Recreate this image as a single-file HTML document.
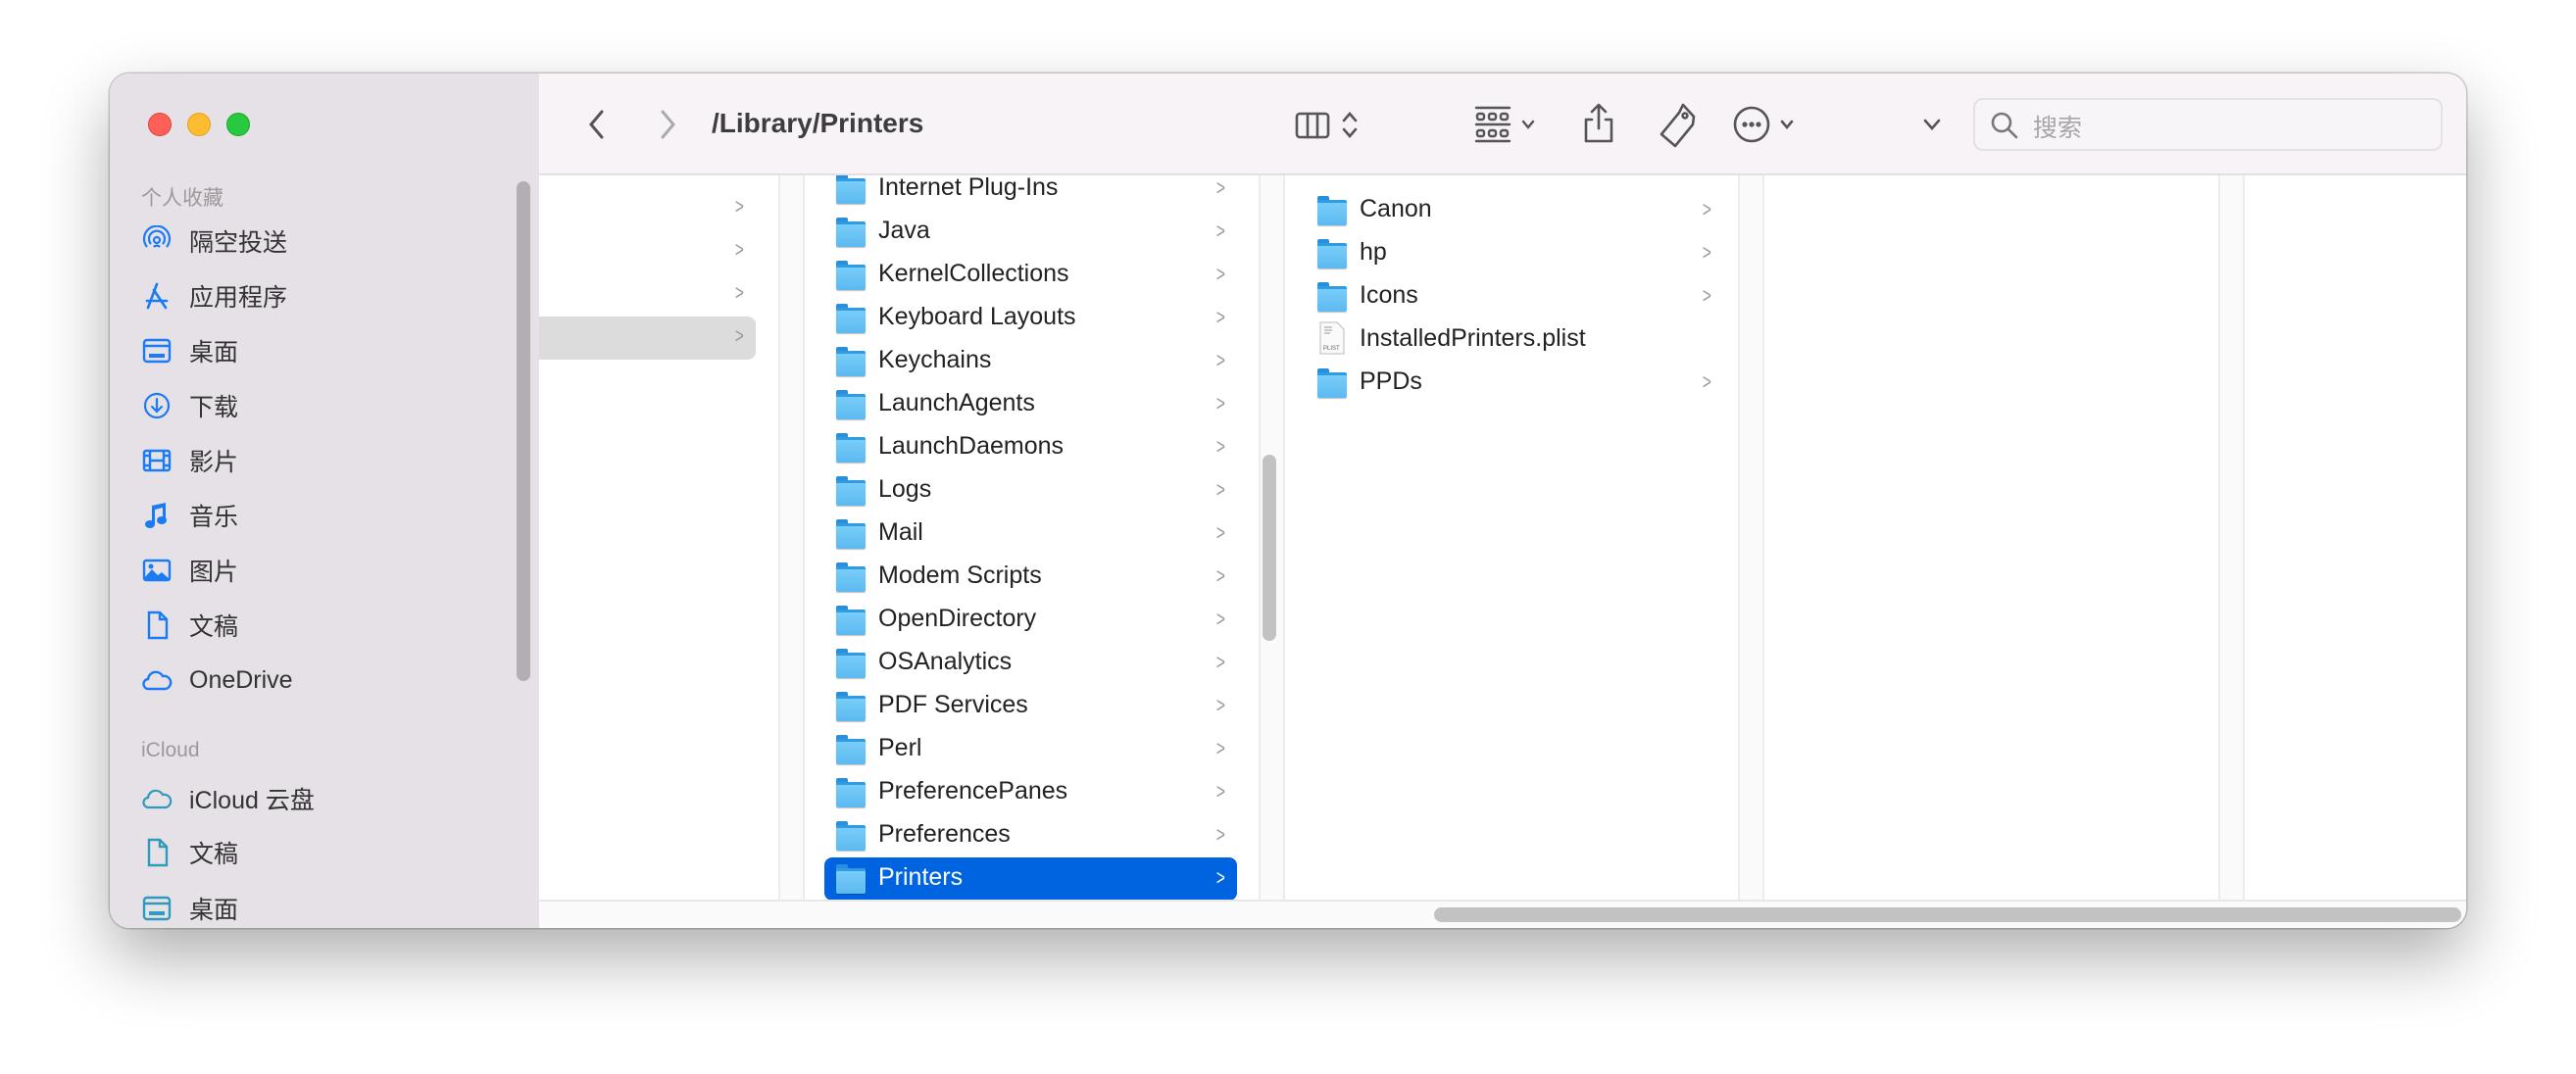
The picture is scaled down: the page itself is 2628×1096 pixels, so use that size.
<!DOCTYPE html>
<html><head><meta charset="utf-8"><style>
*{margin:0;padding:0;box-sizing:border-box}
body{width:2628px;height:1096px;background:#fff;position:relative;overflow:hidden;font-family:"Liberation Sans","Noto Sans CJK SC",sans-serif}
.win{position:absolute;left:112px;top:75px;width:2404px;height:872px;border-radius:20px;overflow:hidden;background:#fff;box-shadow:0 30px 70px rgba(0,0,0,.32),0 0 0 1.5px rgba(0,0,0,.18)}
.side{position:absolute;left:0;top:0;width:438px;height:872px;background:#e6e1e6}
.tb{position:absolute;left:438px;top:0;right:0;height:104px;background:#f7f3f7;border-bottom:2px solid #e3dfe3}
.abs{position:absolute}
.dot{position:absolute;width:24px;height:24px;border-radius:50%;top:40px}
.sh{position:absolute;left:32px;font-size:21px;color:#9c989c}
.si{position:absolute;left:32px;height:40px;display:flex;align-items:center;font-size:25px;color:#333}
.si svg{width:32px;height:32px;margin-right:17px;flex:none}
.gut{position:absolute;top:104px;height:814px;width:27px;background:#fafafa;border-left:2px solid #ececec;border-right:2px solid #ececec}
.gut i{position:absolute;bottom:8px;left:8px;width:8px;height:14px;border-left:1.5px solid #aaa;border-right:1.5px solid #aaa}
.row{position:absolute;height:44px;display:flex;align-items:center;font-size:25px;color:#222}
.chev{position:absolute;font-size:22px;color:#999;transform:scaleX(.7)}
.fold{width:30px;height:27px;position:relative;margin-right:13px;flex:none}
.fold:before{content:"";position:absolute;left:0;top:0;width:12px;height:6px;background:#2a8fdb;border-radius:2px 2px 0 0}
.fold:after{content:"";position:absolute;left:0;top:4px;width:30px;height:23px;background:linear-gradient(#78cdf8,#5cb9f0);border-radius:2px;border-top:3px solid #2f9be3;box-shadow:0 1px 1px rgba(0,0,0,.25)}
</style></head><body>
<div class="win">
<div class="side">
<div class="dot" style="left:39px;background:#fe5f57;border:1px solid #e0443e"></div>
<div class="dot" style="left:79px;background:#febc2e;border:1px solid #dea123"></div>
<div class="dot" style="left:119px;background:#28c840;border:1px solid #1aab29"></div>
<div class="sh" style="top:111px">个人收藏</div>
<div class="si" style="top:151px"><svg viewBox="0 0 32 32" fill="none" stroke="#1a7cf5" stroke-width="2.2"><circle cx="16" cy="15" r="3"/><path d="M10 19a8 8 0 1 1 12 0M6 22a13 13 0 1 1 20 0M13 22a4 4 0 0 1 6 0"/></svg>隔空投送</div>
<div class="si" style="top:207px"><svg viewBox="0 0 32 32" fill="none" stroke="#1a7cf5" stroke-width="2.6" stroke-linecap="round"><path d="M16 4L7 28M13 10l12 18M6 21h20"/></svg>应用程序</div>
<div class="si" style="top:263px"><svg viewBox="0 0 32 32" fill="none" stroke="#1a7cf5" stroke-width="2.4"><rect x="3" y="5" width="26" height="22" rx="3"/><path d="M3 11h26"/><rect x="8" y="19" width="16" height="4" fill="#1a7cf5" stroke="none"/></svg>桌面</div>
<div class="si" style="top:319px"><svg viewBox="0 0 32 32" fill="none" stroke="#1a7cf5" stroke-width="2.2" stroke-linecap="round"><circle cx="16" cy="16" r="12"/><path d="M16 9v13M11 17l5 5 5-5"/></svg>下载</div>
<div class="si" style="top:375px"><svg viewBox="0 0 32 32" fill="none" stroke="#1a7cf5" stroke-width="2.4"><rect x="3" y="6" width="26" height="20" rx="2"/><path d="M9 6v20M23 6v20M9 16h14M3 11h6M3 21h6M23 11h6M23 21h6"/></svg>影片</div>
<div class="si" style="top:431px"><svg viewBox="0 0 32 32" fill="#1a7cf5"><path d="M11 6l14-3v18h-3V8l-8 2v15h-3z"/><ellipse cx="9" cy="25" rx="5" ry="4"/><ellipse cx="21" cy="21" rx="5" ry="4"/></svg>音乐</div>
<div class="si" style="top:487px"><svg viewBox="0 0 32 32"><rect x="3" y="6" width="26" height="20" rx="2" fill="none" stroke="#1a7cf5" stroke-width="2.4"/><path d="M3 24l8-9 6 6 4-3 8 7v1H3z" fill="#1a7cf5"/><circle cx="10" cy="12" r="2.5" fill="#1a7cf5"/></svg>图片</div>
<div class="si" style="top:543px"><svg viewBox="0 0 32 32" fill="none" stroke="#1a7cf5" stroke-width="2.4"><path d="M8 3h11l7 7v19H8zM19 3v7h7"/></svg>文稿</div>
<div class="si" style="top:599px"><svg viewBox="0 0 32 32" fill="none" stroke="#1a7cf5" stroke-width="2.4"><path d="M8 25a5 5 0 0 1-1-10 8 8 0 0 1 15-3 6 6 0 0 1 3 13z"/></svg>OneDrive</div>
<div class="sh" style="top:679px">iCloud</div>
<div class="si" style="top:720px"><svg viewBox="0 0 32 32" fill="none" stroke="#2f9bbc" stroke-width="2.2"><path d="M8 25a5 5 0 0 1-1-10 8 8 0 0 1 15-3 6 6 0 0 1 3 13z"/></svg>iCloud 云盘</div>
<div class="si" style="top:775px"><svg viewBox="0 0 32 32" fill="none" stroke="#2f9bbc" stroke-width="2.4"><path d="M8 3h11l7 7v19H8zM19 3v7h7"/></svg>文稿</div>
<div class="si" style="top:832px"><svg viewBox="0 0 32 32" fill="none" stroke="#2f9bbc" stroke-width="2.4"><rect x="3" y="5" width="26" height="22" rx="3"/><path d="M3 11h26"/><rect x="8" y="19" width="16" height="4" fill="#2f9bbc" stroke="none"/></svg>桌面</div>
<div class="abs" style="left:415px;top:110px;width:14px;height:510px;border-radius:7px;background:#b2aeb2"></div>
</div>

<div class="tb">
<svg class="abs" style="left:47px;top:36px" width="24" height="32" viewBox="0 0 24 32" fill="none" stroke="#555" stroke-width="3" stroke-linecap="round"><path d="M17 3L6 16l11 13"/></svg>
<svg class="abs" style="left:119px;top:36px" width="24" height="32" viewBox="0 0 24 32" fill="none" stroke="#aaa" stroke-width="3" stroke-linecap="round"><path d="M7 3l11 13L7 29"/></svg>
<div class="abs" style="left:176px;top:35px;font-size:28px;font-weight:bold;color:#3d3d3d">/Library/Printers</div>
<svg class="abs" style="left:771px;top:35px" width="80" height="34" viewBox="0 0 80 34" fill="none" stroke="#555" stroke-width="2.6" stroke-linecap="round"><rect x="2" y="6" width="32" height="24" rx="3"/><path d="M13 6v24M23 6v24M50 13l6-7 6 7M50 22l6 7 6-7"/></svg>
<svg class="abs" style="left:954px;top:32px" width="80" height="40" viewBox="0 0 80 40" fill="none" stroke="#555" stroke-width="2.4" stroke-linecap="round"><path d="M2 3h34M2 20h34M2 37h34"/><rect x="3" y="9" width="7" height="6" rx="2"/><rect x="15" y="9" width="7" height="6" rx="2"/><rect x="27" y="9" width="7" height="6" rx="2"/><rect x="3" y="26" width="7" height="6" rx="2"/><rect x="15" y="26" width="7" height="6" rx="2"/><rect x="27" y="26" width="7" height="6" rx="2"/><path d="M50 17l5 6 5-6"/></svg>
<svg class="abs" style="left:1063px;top:29px" width="36" height="44" viewBox="0 0 36 44" fill="none" stroke="#555" stroke-width="2.6" stroke-linecap="round" stroke-linejoin="round"><path d="M18 3v24M11 10l7-7 7 7M11 18H5v22h26V18h-6"/></svg>
<svg class="abs" style="left:1138px;top:28px" width="44" height="50" viewBox="0 0 44 50" fill="none" stroke="#555" stroke-width="2.6" stroke-linejoin="round"><path d="M29 4l11 12-1 8-18 22-14-12L25 12z"/><circle cx="31" cy="15" r="2.4"/></svg>
<svg class="abs" style="left:1217px;top:32px" width="80" height="40" viewBox="0 0 80 40" fill="none" stroke="#555" stroke-width="2.6" stroke-linecap="round"><circle cx="20" cy="20" r="17"/><circle cx="13" cy="20" r="1.3" fill="#555"/><circle cx="20" cy="20" r="1.3" fill="#555"/><circle cx="27" cy="20" r="1.3" fill="#555"/><path d="M51 17l5 6 5-6"/></svg>
<svg class="abs" style="left:1411px;top:45px" width="20" height="14" viewBox="0 0 20 14" fill="none" stroke="#555" stroke-width="2.6" stroke-linecap="round"><path d="M3 3l7 8 7-8"/></svg>
<div class="abs" style="left:1463px;top:25px;width:479px;height:54px;border:2px solid #e4e0e4;border-radius:10px;background:#f8f5f8"></div>
<svg class="abs" style="left:1480px;top:38px" width="30" height="30" viewBox="0 0 30 30" fill="none" stroke="#777" stroke-width="2.6" stroke-linecap="round"><circle cx="12" cy="12" r="9"/><path d="M19 19l8 8"/></svg>
<div class="abs" style="left:1524px;top:36px;font-size:25px;color:#a8a4a8">搜索</div>
</div>

<!-- column 1 -->
<div class="abs" style="left:438px;top:248px;width:221px;height:44px;background:#dcdcdc;border-radius:0 8px 8px 0"></div>
<div class="chev" style="left:636px;top:123px">&gt;</div>
<div class="chev" style="left:636px;top:167px">&gt;</div>
<div class="chev" style="left:636px;top:211px">&gt;</div>
<div class="chev" style="left:636px;top:255px">&gt;</div>

<div class="gut" style="left:682px"><i></i></div>
<div class="gut" style="left:1172px"><i></i></div>
<div class="gut" style="left:1661px"><i></i></div>
<div class="gut" style="left:2151px"></div>
<div class="abs" style="left:1176px;top:389px;width:14px;height:190px;border-radius:7px;background:#c2c2c2"></div>

<!-- column 2 -->
<div class="abs" style="left:709px;top:104px;width:463px;height:814px;overflow:hidden">
<div class="abs" style="left:20px;top:696px;width:421px;height:44px;background:#0064e1;border-radius:8px"></div>
<div style="position:absolute;left:0;top:-10px;width:463px">
<div class="row" style="left:32px;top:0"><div class="fold"></div>Internet Plug-Ins</div>
<div class="row" style="left:32px;top:44px"><div class="fold"></div>Java</div>
<div class="row" style="left:32px;top:88px"><div class="fold"></div>KernelCollections</div>
<div class="row" style="left:32px;top:132px"><div class="fold"></div>Keyboard Layouts</div>
<div class="row" style="left:32px;top:176px"><div class="fold"></div>Keychains</div>
<div class="row" style="left:32px;top:220px"><div class="fold"></div>LaunchAgents</div>
<div class="row" style="left:32px;top:264px"><div class="fold"></div>LaunchDaemons</div>
<div class="row" style="left:32px;top:308px"><div class="fold"></div>Logs</div>
<div class="row" style="left:32px;top:352px"><div class="fold"></div>Mail</div>
<div class="row" style="left:32px;top:396px"><div class="fold"></div>Modem Scripts</div>
<div class="row" style="left:32px;top:440px"><div class="fold"></div>OpenDirectory</div>
<div class="row" style="left:32px;top:484px"><div class="fold"></div>OSAnalytics</div>
<div class="row" style="left:32px;top:528px"><div class="fold"></div>PDF Services</div>
<div class="row" style="left:32px;top:572px"><div class="fold"></div>Perl</div>
<div class="row" style="left:32px;top:616px"><div class="fold"></div>PreferencePanes</div>
<div class="row" style="left:32px;top:660px"><div class="fold"></div>Preferences</div>
<div class="row" style="left:32px;top:704px;color:#fff"><div class="fold"></div>Printers</div>
<div class="chev" style="left:418px;top:10px">&gt;</div><div class="chev" style="left:418px;top:54px">&gt;</div><div class="chev" style="left:418px;top:98px">&gt;</div><div class="chev" style="left:418px;top:142px">&gt;</div><div class="chev" style="left:418px;top:186px">&gt;</div><div class="chev" style="left:418px;top:230px">&gt;</div><div class="chev" style="left:418px;top:274px">&gt;</div><div class="chev" style="left:418px;top:318px">&gt;</div><div class="chev" style="left:418px;top:362px">&gt;</div><div class="chev" style="left:418px;top:406px">&gt;</div><div class="chev" style="left:418px;top:450px">&gt;</div><div class="chev" style="left:418px;top:494px">&gt;</div><div class="chev" style="left:418px;top:538px">&gt;</div><div class="chev" style="left:418px;top:582px">&gt;</div><div class="chev" style="left:418px;top:626px">&gt;</div><div class="chev" style="left:418px;top:670px">&gt;</div><div class="chev" style="left:418px;top:714px;color:#fff">&gt;</div>
</div></div>

<!-- column 3 -->
<div class="abs" style="left:1199px;top:104px;width:462px;height:814px">
<div class="row" style="left:33px;top:12px"><div class="fold"></div>Canon</div>
<div class="row" style="left:33px;top:56px"><div class="fold"></div>hp</div>
<div class="row" style="left:33px;top:100px"><div class="fold"></div>Icons</div>
<div class="row" style="left:33px;top:144px"><svg width="30" height="34" viewBox="0 0 30 34" style="margin-right:13px"><path d="M3 1h17l7 7v25H3z" fill="#fafafa" stroke="#bbb"/><path d="M7 6h8M7 9h8M7 12h6" stroke="#999"/><text x="6" y="29" font-size="6" fill="#666" font-family="Liberation Sans">PLIST</text></svg>InstalledPrinters.plist</div>
<div class="row" style="left:33px;top:188px"><div class="fold"></div>PPDs</div>
<div class="chev" style="left:424px;top:22px">&gt;</div><div class="chev" style="left:424px;top:66px">&gt;</div><div class="chev" style="left:424px;top:110px">&gt;</div><div class="chev" style="left:424px;top:198px">&gt;</div>
</div>

<!-- bottom scroll -->
<div class="abs" style="left:438px;top:843px;right:0;height:29px;background:#fafafa;border-top:2px solid #e8e8e8"></div>
<div class="abs" style="left:1351px;top:851px;width:1048px;height:15px;border-radius:8px;background:#c2c2c2"></div>
</div>
</body></html>
